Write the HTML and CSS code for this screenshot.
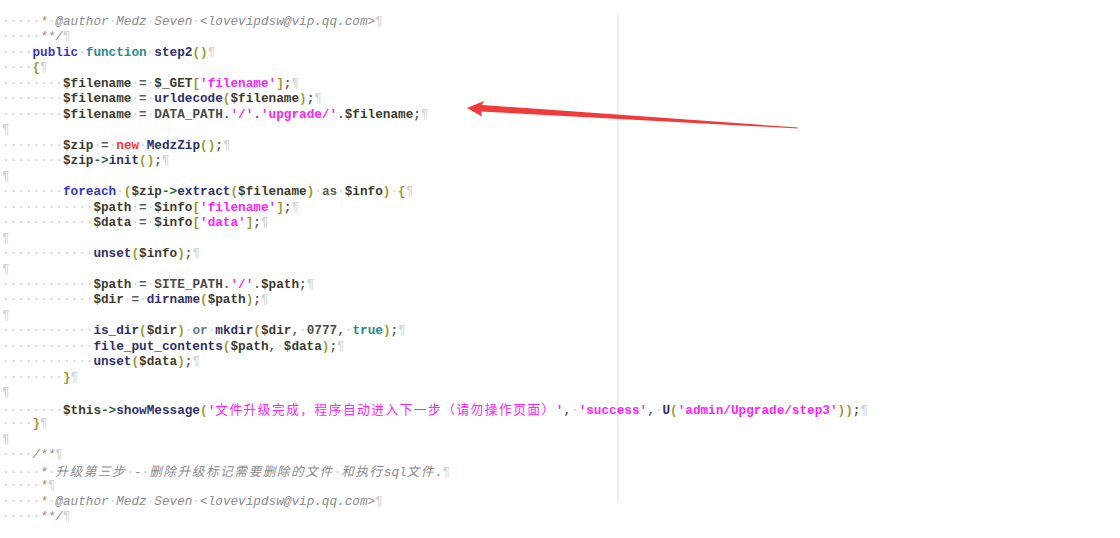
FILE: index.html
```html
<!DOCTYPE html>
<html lang="zh-CN">
<head>
    <meta charset="UTF-8">
    <title>MedzZip upgrade step2</title>
    <link rel="stylesheet" href="styles.css">
</head>
<body>

<div class="editor">
    <div class="edge"></div>

    <div class="code">
        <div class="ln"><span class="d">·····</span><span class="cm">*<span class="d">·</span>@author<span class="d">·</span>Medz<span class="d">·</span>Seven<span class="d">·</span>&lt;lovevipdsw@vip.qq.com&gt;</span><span class="p">¶</span></div>
        <div class="ln"><span class="d">·····</span><span class="cm">**/</span><span class="p">¶</span></div>
        <div class="ln"><span class="d">····</span><span class="kw">public</span><span class="d">·</span><span class="fn">function</span><span class="d">·</span><span class="nm">step2</span><span class="b">()</span><span class="p">¶</span></div>
        <div class="ln"><span class="d">····</span><span class="b">{</span><span class="p">¶</span></div>
        <div class="ln"><span class="d">········</span><span class="v">$filename</span><span class="d">·</span><span class="o">=</span><span class="d">·</span><span class="v">$_GET</span><span class="b">[</span><span class="s">'filename'</span><span class="b">]</span><span class="o">;</span><span class="p">¶</span></div>
        <div class="ln"><span class="d">········</span><span class="v">$filename</span><span class="d">·</span><span class="o">=</span><span class="d">·</span><span class="nm">urldecode</span><span class="b">(</span><span class="v">$filename</span><span class="b">)</span><span class="o">;</span><span class="p">¶</span></div>
        <div class="ln"><span class="d">········</span><span class="v">$filename</span><span class="d">·</span><span class="o">=</span><span class="d">·</span><span class="c">DATA_PATH</span><span class="o">.</span><span class="s">'/'</span><span class="o">.</span><span class="s">'upgrade/'</span><span class="o">.</span><span class="v">$filename</span><span class="o">;</span><span class="p">¶</span></div>
        <div class="ln"><span class="p">¶</span></div>
        <div class="ln"><span class="d">········</span><span class="v">$zip</span><span class="d">·</span><span class="o">=</span><span class="d">·</span><span class="nw">new</span><span class="d">·</span><span class="nm">MedzZip</span><span class="b">()</span><span class="o">;</span><span class="p">¶</span></div>
        <div class="ln"><span class="d">········</span><span class="v">$zip</span><span class="ar">-&gt;</span><span class="nm">init</span><span class="b">()</span><span class="o">;</span><span class="p">¶</span></div>
        <div class="ln"><span class="p">¶</span></div>
        <div class="ln"><span class="d">········</span><span class="kw">foreach</span><span class="d">·</span><span class="b">(</span><span class="v">$zip</span><span class="ar">-&gt;</span><span class="nm">extract</span><span class="b">(</span><span class="v">$filename</span><span class="b">)</span><span class="d">·</span><span class="o">as</span><span class="d">·</span><span class="v">$info</span><span class="b">)</span><span class="d">·</span><span class="b">{</span><span class="p">¶</span></div>
        <div class="ln"><span class="d">············</span><span class="v">$path</span><span class="d">·</span><span class="o">=</span><span class="d">·</span><span class="v">$info</span><span class="b">[</span><span class="s">'filename'</span><span class="b">]</span><span class="o">;</span><span class="p">¶</span></div>
        <div class="ln"><span class="d">············</span><span class="v">$data</span><span class="d">·</span><span class="o">=</span><span class="d">·</span><span class="v">$info</span><span class="b">[</span><span class="s">'data'</span><span class="b">]</span><span class="o">;</span><span class="p">¶</span></div>
        <div class="ln"><span class="p">¶</span></div>
        <div class="ln"><span class="d">············</span><span class="nm">unset</span><span class="b">(</span><span class="v">$info</span><span class="b">)</span><span class="o">;</span><span class="p">¶</span></div>
        <div class="ln"><span class="p">¶</span></div>
        <div class="ln"><span class="d">············</span><span class="v">$path</span><span class="d">·</span><span class="o">=</span><span class="d">·</span><span class="c">SITE_PATH</span><span class="o">.</span><span class="s">'/'</span><span class="o">.</span><span class="v">$path</span><span class="o">;</span><span class="p">¶</span></div>
        <div class="ln"><span class="d">············</span><span class="v">$dir</span><span class="d">·</span><span class="o">=</span><span class="d">·</span><span class="nm">dirname</span><span class="b">(</span><span class="v">$path</span><span class="b">)</span><span class="o">;</span><span class="p">¶</span></div>
        <div class="ln"><span class="p">¶</span></div>
        <div class="ln"><span class="d">············</span><span class="nm">is_dir</span><span class="b">(</span><span class="v">$dir</span><span class="b">)</span><span class="d">·</span><span class="or">or</span><span class="d">·</span><span class="nm">mkdir</span><span class="b">(</span><span class="v">$dir</span><span class="o">,</span><span class="d">·</span><span class="c">0777</span><span class="o">,</span><span class="d">·</span><span class="fn">true</span><span class="b">)</span><span class="o">;</span><span class="p">¶</span></div>
        <div class="ln"><span class="d">············</span><span class="nm">file_put_contents</span><span class="b">(</span><span class="v">$path</span><span class="o">,</span><span class="d">·</span><span class="v">$data</span><span class="b">)</span><span class="o">;</span><span class="p">¶</span></div>
        <div class="ln"><span class="d">············</span><span class="nm">unset</span><span class="b">(</span><span class="v">$data</span><span class="b">)</span><span class="o">;</span><span class="p">¶</span></div>
        <div class="ln"><span class="d">········</span><span class="b">}</span><span class="p">¶</span></div>
        <div class="ln"><span class="p">¶</span></div>
        <div class="ln"><span class="d">········</span><span class="v">$this</span><span class="ar">-&gt;</span><span class="nm">showMessage</span><span class="b">(</span><span class="s">'<span class="cjk">文件升级完成，程序自动进入下一步（请勿操作页面）</span>'</span><span class="o">,</span><span class="d">·</span><span class="s">'success'</span><span class="o">,</span><span class="d">·</span><span class="nm">U</span><span class="b">(</span><span class="s">'admin/Upgrade/step3'</span><span class="b">))</span><span class="o">;</span><span class="p">¶</span></div>
        <div class="ln"><span class="d">····</span><span class="b">}</span><span class="p">¶</span></div>
        <div class="ln"><span class="p">¶</span></div>
        <div class="ln"><span class="d">····</span><span class="cm">/**</span><span class="p">¶</span></div>
        <div class="ln"><span class="d">·····</span><span class="cm">*<span class="d">·</span><span class="cjk">升级第三步</span><span class="d">·</span>-<span class="d">·</span><span class="cjk">删除升级标记需要删除的文件</span><span class="d">·</span><span class="cjk">和执行</span>sql<span class="cjk">文件</span>.</span><span class="p">¶</span></div>
        <div class="ln"><span class="d">·····</span><span class="cm">*</span><span class="p">¶</span></div>
        <div class="ln"><span class="d">·····</span><span class="cm">*<span class="d">·</span>@author<span class="d">·</span>Medz<span class="d">·</span>Seven<span class="d">·</span>&lt;lovevipdsw@vip.qq.com&gt;</span><span class="p">¶</span></div>
        <div class="ln"><span class="d">·····</span><span class="cm">**/</span><span class="p">¶</span></div>
    </div>

    <!-- red arrow drawn on top of the screenshot -->
    <svg class="arrow" width="1120" height="538" viewBox="0 0 1120 538">
        <polygon points="467,108 484,101 482,105 798,127.5 798,128.5 481,111.5 482,116.5" fill="#f23a3a"/>
    </svg>
</div>

</body>
</html>
```

FILE: styles.css
```css
body {
    margin: 0;
    padding: 0;
    background-color: #ffffff;
}
.editor {
    position: relative;
    width: 1120px;
    height: 538px;
    overflow: hidden;
}
.edge {
    position: absolute;
    left: 617px;
    top: 14px;
    width: 2px;
    height: 489px;
    background-color: #ededed;
}
.code {
    position: relative;
    padding: 14px 0 0 2px;
    font-family: "Liberation Mono", "Noto Sans CJK SC", monospace;
    font-size: 12.7px;
    font-weight: bold;
}
.ln {
    height: 15.47px;
    line-height: 15.47px;
    white-space: pre;
}
.d {
    color: #d0d0d0;
    font-weight: normal;
    font-style: normal;
}
.p {
    color: #d4d4d4;
    font-weight: normal;
    font-style: normal;
}
.cm {
    color: #8c8c8c;
    font-style: italic;
    font-weight: normal;
}
.kw { color: #3535c4; }            /* public, foreach */
.fn { color: #2b8b8b; }            /* function, true */
.nm { color: #2f2f6c; }            /* names and calls */
.b  { color: #9a9a32; }            /* brackets */
.v  { color: #3b3a2c; }            /* variables */
.o  { color: #5a5a5a; }
.or { color: #5f7f7f; }
.c  { color: #4a4a4a; }
.s  { color: #ff22ff; }            /* strings */
.nw { color: #ff3434; }
.ar { color: #2f6a2f; }
.cjk {
    font-family: "Noto Sans CJK SC", sans-serif;
    font-weight: normal;
    letter-spacing: 1.5px;
}
.arrow {
    position: absolute;
    left: 0;
    top: 0;
    pointer-events: none;
}
```
